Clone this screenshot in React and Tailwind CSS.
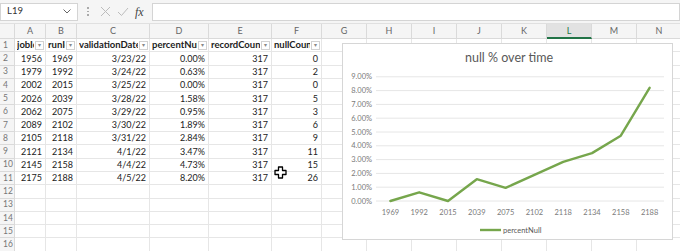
import React from "react";

const data = [
  [1956, 1969, "3/23/22", "0.00%", 317, 0],
  [1979, 1992, "3/24/22", "0.63%", 317, 2],
  [2002, 2015, "3/25/22", "0.00%", 317, 0],
  [2026, 2039, "3/28/22", "1.58%", 317, 5],
  [2062, 2075, "3/29/22", "0.95%", 317, 3],
  [2089, 2102, "3/30/22", "1.89%", 317, 6],
  [2105, 2118, "3/31/22", "2.84%", 317, 9],
  [2121, 2134, "4/1/22", "3.47%", 317, 11],
  [2145, 2158, "4/4/22", "4.73%", 317, 15],
  [2175, 2188, "4/5/22", "8.20%", 317, 26],
];
const headers = ["jobId", "runId", "validationDate", "percentNull", "recordCount", "nullCount"];
const letters = ["A", "B", "C", "D", "E", "F", "G", "H", "I", "J", "K", "L", "M", "N"];
const pct = [0, 0.63, 0, 1.58, 0.95, 1.89, 2.84, 3.47, 4.73, 8.2];
const cats = ["1969", "1992", "2015", "2039", "2075", "2102", "2118", "2134", "2158", "2188"];

function FilterBtn() {
  return (
    <span className="flex h-[9px] w-[9px] shrink-0 items-center justify-center border border-[#d2d2d2] bg-white text-[6px] leading-none text-[#888]">
      ▾
    </span>
  );
}

function Chart() {
  const gy = (v) => 157 - v * 13.8;
  const gx = (i) => 33 + 28.8 * (i + 0.5);
  const pts = pct.map((v, i) => `${gx(i)},${gy(v)}`).join(" ");
  return (
    <div className="absolute left-[342px] top-[43px] h-[197px] w-[331px] border border-[#d6d6d6] bg-white">
      <svg width="331" height="197" viewBox="0 0 331 197" className="block">
        <text x="166" y="18" textAnchor="middle" fontSize="12.5" fill="#595959" fontFamily="Lato, sans-serif">
          null % over time
        </text>
        {Array.from({ length: 10 }).map((_, i) => (
          <g key={i}>
            <line x1="33" x2="321" y1={gy(i)} y2={gy(i)} stroke="#e6e6e6" strokeWidth="1" />
            <text x="29" y={gy(i) + 2.6} textAnchor="end" fontSize="7.5" fill="#7a7a7a" fontFamily="Lato, sans-serif">
              {i.toFixed(2)}%
            </text>
          </g>
        ))}
        {cats.map((c, i) => (
          <text key={c} x={gx(i)} y="170.5" textAnchor="middle" fontSize="7.5" fill="#7a7a7a" fontFamily="Lato, sans-serif">
            {c}
          </text>
        ))}
        <polyline points={pts} fill="none" stroke="#76a64c" strokeWidth="2.4" strokeLinejoin="round" strokeLinecap="round" />
        <line x1="137" x2="158" y1="186" y2="186" stroke="#76a64c" strokeWidth="2.4" />
        <text x="160" y="189" fontSize="7.5" fill="#595959" fontFamily="Lato, sans-serif">
          percentNull
        </text>
      </svg>
    </div>
  );
}

export default function App() {
  const rowsCount = 16;
  return (
    <div className="relative h-[251px] w-[680px] overflow-hidden bg-white font-['Lato',sans-serif]">
      {/* formula bar */}
      <div className="flex h-[24px] items-center gap-[4px] border-b border-[#e0e0e0] bg-[#f5f5f5]">
        <div className="flex h-[18px] w-[78px] items-center justify-between border border-[#d4d4d4] bg-white pl-[6px] pr-[6px] text-[9.5px] text-[#333]">
          <span>L19</span>
          <svg width="8" height="5" viewBox="0 0 8 5">
            <path d="M0.5 0.5 L4 4 L7.5 0.5" fill="none" stroke="#666" strokeWidth="1" />
          </svg>
        </div>
        <div className="flex w-[12px] flex-col items-center gap-[2px]">
          <span className="h-[1.5px] w-[1.5px] bg-[#aaa]" />
          <span className="h-[1.5px] w-[1.5px] bg-[#aaa]" />
          <span className="h-[1.5px] w-[1.5px] bg-[#aaa]" />
        </div>
        <div className="flex items-center gap-[6px] pl-[2px]">
          <svg width="11" height="11" viewBox="0 0 11 11">
            <path d="M1 1 L10 10 M10 1 L1 10" stroke="#bcbcbc" strokeWidth="1" />
          </svg>
          <svg width="12" height="10" viewBox="0 0 12 10">
            <path d="M1 5 L4.5 8.5 L11 1" fill="none" stroke="#bcbcbc" strokeWidth="1" />
          </svg>
          <span className="font-['Liberation_Serif',serif] text-[12px] italic text-[#444]">fx</span>
        </div>
        <div className="ml-[4px] h-[18px] flex-1 border border-[#d4d4d4] bg-white" />
      </div>

      {/* grid */}
      <div className="grid grid-cols-[15px_31px_31px_73px_59px_63px_50px_repeat(8,45px)] grid-rows-[15px] auto-rows-[13.3px] text-[9px] text-[#222]">
        {/* column headers */}
        <div className="border-b border-r border-[#dadada] bg-[#f5f5f5]" />
        {letters.map((l) => (
          <div
            key={l}
            className={
              l === "L"
                ? "flex items-center justify-center border-b-2 border-r border-b-[#217346] border-r-[#dadada] bg-[#e2e2e2] text-[9px] text-[#217346]"
                : "flex items-center justify-center border-b border-r border-[#dadada] bg-[#f5f5f5] text-[9px] text-[#666]"
            }
          >
            {l}
          </div>
        ))}
        {Array.from({ length: rowsCount }).map((_, r) => {
          const rowNum = r + 1;
          const cells = [];
          cells.push(
            <div key="h" className="flex items-center border-b border-r border-[#dadada] bg-[#f5f5f5] pl-[3px] text-[8.5px] text-[#777]">
              {rowNum}
            </div>
          );
          for (let c = 0; c < 14; c++) {
            let content = null;
            if (r === 0 && c < 6) {
              content = (
                <div className="flex h-full items-center gap-[1px] pl-[2px] pr-[1px]">
                  <span className="min-w-0 flex-1 overflow-hidden whitespace-nowrap text-[9.5px] font-bold text-[#222]">{headers[c]}</span>
                  <FilterBtn />
                </div>
              );
            } else if (r >= 1 && r <= 10 && c < 6) {
              content = (
                <div className="flex h-full items-center justify-end pr-[3px]">{data[r - 1][c]}</div>
              );
            }
            cells.push(
              <div key={c} className="border-b border-r border-[#e6e6e6]">
                {content}
              </div>
            );
          }
          return <React.Fragment key={r}>{cells}</React.Fragment>;
        })}
      </div>

      <Chart />

      {/* cursor */}
      <svg className="absolute left-[274px] top-[166px]" width="13" height="13" viewBox="0 0 13 13">
        <path d="M4.5 1 H8.5 V4.5 H12 V8.5 H8.5 V12 H4.5 V8.5 H1 V4.5 H4.5 Z" fill="#fff" stroke="#000" strokeWidth="1.3" strokeLinejoin="round" />
      </svg>
    </div>
  );
}
